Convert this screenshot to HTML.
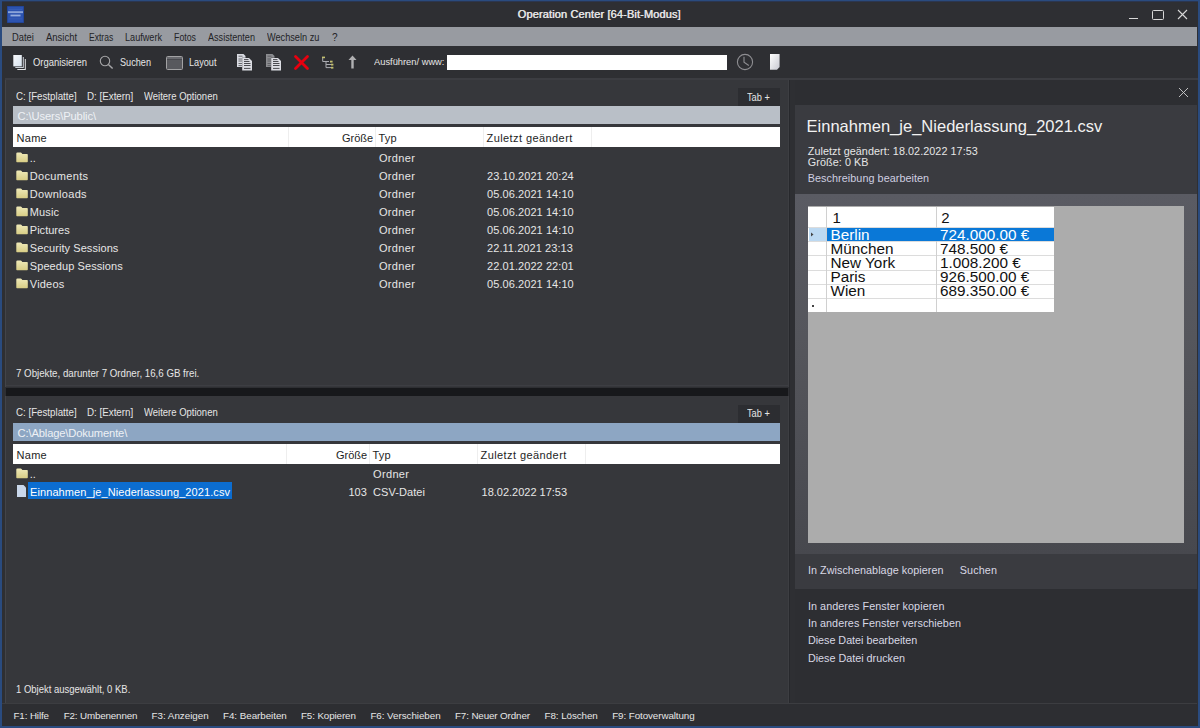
<!DOCTYPE html>
<html><head><meta charset="utf-8"><style>
html,body{margin:0;padding:0;width:1200px;height:728px;overflow:hidden;background:#2b2c30}
body{position:relative;font-family:"Liberation Sans", sans-serif}
div{box-sizing:content-box}
</style></head><body>
<div style="position:absolute;left:0px;top:0px;width:1200px;height:728px;background:#2a4b7f;"></div>
<div style="position:absolute;left:2px;top:1px;width:1196px;height:725px;background:#2e2f33;"></div>
<div style="position:absolute;left:2px;top:1px;width:1196px;height:1px;background:#2b3650;"></div>
<svg style="position:absolute;left:7px;top:6px" width="17" height="17" viewBox="0 0 17 17"><rect x="0" y="0" width="17" height="17" fill="#1f3f8a"/><rect x="0.6" y="0.6" width="15.8" height="15.8" fill="#2c53b0"/><rect x="1" y="5.2" width="15" height="1.9" fill="#8aa3d8"/><rect x="3.5" y="8.6" width="10" height="1.8" fill="#95adde"/><rect x="2" y="3" width="13" height="0.6" fill="#3f64bc"/><rect x="2" y="12.6" width="13" height="0.6" fill="#3f64bc"/></svg>
<div style="position:absolute;left:517.50px;top:7.56px;font-size:11px;line-height:12.65px;color:#e4e4e4;font-weight:400;letter-spacing:0.133px;white-space:pre;text-shadow:0.45px 0 0 #e4e4e4;">Operation Center [64-Bit-Modus]</div>
<div style="position:absolute;left:1129px;top:18px;width:9px;height:1px;background:#d8d8d8;"></div>
<div style="position:absolute;left:1152px;top:10px;width:10px;height:8px;border:1px solid #d8d8d8;border-radius:1.5px"></div>
<svg style="position:absolute;left:1177px;top:9px" width="11" height="11"><path d="M1 1L10 10M10 1L1 10" stroke="#d8d8d8" stroke-width="1.1"/></svg>
<div style="position:absolute;left:2px;top:27px;width:1195px;height:19px;background:#989ba1;"></div>
<div style="position:absolute;left:12.20px;top:31.58px;font-size:10px;line-height:11.5px;color:#232326;font-weight:400;letter-spacing:0.000px;white-space:pre;transform:scaleX(0.9326);transform-origin:0 0;">Datei</div>
<div style="position:absolute;left:45.50px;top:31.58px;font-size:10px;line-height:11.5px;color:#232326;font-weight:400;letter-spacing:0.000px;white-space:pre;transform:scaleX(0.9466);transform-origin:0 0;">Ansicht</div>
<div style="position:absolute;left:88.80px;top:31.58px;font-size:10px;line-height:11.5px;color:#232326;font-weight:400;letter-spacing:0.000px;white-space:pre;transform:scaleX(0.8529);transform-origin:0 0;">Extras</div>
<div style="position:absolute;left:124.80px;top:31.58px;font-size:10px;line-height:11.5px;color:#232326;font-weight:400;letter-spacing:0.000px;white-space:pre;transform:scaleX(0.9129);transform-origin:0 0;">Laufwerk</div>
<div style="position:absolute;left:173.80px;top:31.58px;font-size:10px;line-height:11.5px;color:#232326;font-weight:400;letter-spacing:0.000px;white-space:pre;transform:scaleX(0.8800);transform-origin:0 0;">Fotos</div>
<div style="position:absolute;left:208.00px;top:31.58px;font-size:10px;line-height:11.5px;color:#232326;font-weight:400;letter-spacing:0.000px;white-space:pre;transform:scaleX(0.9082);transform-origin:0 0;">Assistenten</div>
<div style="position:absolute;left:267.00px;top:31.58px;font-size:10px;line-height:11.5px;color:#232326;font-weight:400;letter-spacing:0.000px;white-space:pre;transform:scaleX(0.9173);transform-origin:0 0;">Wechseln zu</div>
<div style="position:absolute;left:332.00px;top:31.58px;font-size:10px;line-height:11.5px;color:#232326;font-weight:400;letter-spacing:0.000px;white-space:pre;">?</div>
<div style="position:absolute;left:2px;top:46px;width:1196px;height:32px;background:#2e2f33;"></div>
<div style="position:absolute;left:33.00px;top:57.32px;font-size:10.4px;line-height:11.96px;color:#e6e6e6;font-weight:400;letter-spacing:0.000px;white-space:pre;transform:scaleX(0.9076);transform-origin:0 0;">Organisieren</div>
<div style="position:absolute;left:120.00px;top:57.32px;font-size:10.4px;line-height:11.96px;color:#e6e6e6;font-weight:400;letter-spacing:0.000px;white-space:pre;transform:scaleX(0.8794);transform-origin:0 0;">Suchen</div>
<div style="position:absolute;left:188.50px;top:57.32px;font-size:10.4px;line-height:11.96px;color:#e6e6e6;font-weight:400;letter-spacing:0.000px;white-space:pre;transform:scaleX(0.8800);transform-origin:0 0;">Layout</div>
<div style="position:absolute;left:373.50px;top:56.47px;font-size:9.8px;line-height:11.27px;color:#e6e6e6;font-weight:400;letter-spacing:0.000px;white-space:pre;transform:scaleX(0.9511);transform-origin:0 0;">Ausführen/ www:</div>
<div style="position:absolute;left:447px;top:55px;width:280px;height:15px;background:#ffffff;"></div>
<svg style="position:absolute;left:12px;top:53px" width="16" height="19" viewBox="0 0 16 19">
<defs><linearGradient id="pg" x1="0" y1="0" x2="1" y2="1"><stop offset="0" stop-color="#f7f8fb"/><stop offset="1" stop-color="#d6e2ee"/></linearGradient></defs>
<rect x="5.3" y="6" width="8.5" height="11" fill="#e2e3e6"/>
<rect x="4.3" y="5" width="8.5" height="11" fill="#2e2f33"/>
<rect x="3.3" y="4" width="8.5" height="11" fill="#c9ced5"/>
<rect x="2.3" y="3" width="8.5" height="11" fill="#2e2f33"/>
<rect x="1.3" y="2" width="8.5" height="11.4" fill="url(#pg)"/>
</svg>
<svg style="position:absolute;left:99px;top:55px" width="17" height="17" viewBox="0 0 17 17"><circle cx="6" cy="6" r="4.7" fill="none" stroke="#a6a6a8" stroke-width="1.1"/><path d="M9.4 9.4L13.6 13.6" stroke="#a6a6a8" stroke-width="1.4"/></svg>
<div style="position:absolute;left:166px;top:55.5px;width:15px;height:12.5px;border:1px solid #a2a2a4;border-radius:1.5px;background:linear-gradient(#68696e 0,#68696e 2.5px,#48494e 2.5px,#58595e 3.5px)"></div>
<svg style="position:absolute;left:235.5px;top:53px" width="18" height="19" viewBox="0 0 18 19">
<path d="M1 1H7.5L9.5 3V14H1Z" fill="#d9dbe2"/>
<g stroke="#5a5b60" stroke-width="0.9"><path d="M2.5 3.2H6.5M2.5 6H8M2.5 8H8M2.5 10.5H8M2.5 12.6H6"/></g>
<path d="M6 4.7H13.2L16.2 7.8V17.8H6Z" fill="#2e2f33"/>
<path d="M6.2 4.9H13L16 8V17.6H6.2Z" fill="#dcdde3"/>
<g stroke="#4a4b50" stroke-width="1"><path d="M8 6.6H12.5M8 8.5H13.5M8 10.5H14.5M8 12.5H14.5M8 15.4H14.5"/></g>
</svg>
<svg style="position:absolute;left:264.8px;top:53px" width="18" height="19" viewBox="0 0 18 19">
<path d="M1 1H7.5L9.5 3V14H1Z" fill="#8b8c90"/>
<g stroke="#5a5b60" stroke-width="0.9"><path d="M2.5 3.2H6.5M2.5 6H8M2.5 8H8M2.5 10.5H8M2.5 12.6H6"/></g>
<path d="M6 4.7H13.2L16.2 7.8V17.8H6Z" fill="#2e2f33"/>
<path d="M6.2 4.9H13L16 8V17.6H6.2Z" fill="#dcdde3"/>
<g stroke="#4a4b50" stroke-width="1"><path d="M8 6.6H12.5M8 8.5H13.5M8 10.5H14.5M8 12.5H14.5M8 15.4H14.5"/></g>
</svg>
<svg style="position:absolute;left:293px;top:54px" width="17" height="17" viewBox="0 0 17 17"><path d="M2.5 2.5L14.5 14.5M14.5 2.5L2.5 14.5" stroke="#e8000f" stroke-width="2.8" stroke-linecap="round"/></svg>
<svg style="position:absolute;left:320px;top:55px" width="15" height="15" viewBox="0 0 15 15">
<g stroke="#a9aab0" stroke-width="1" fill="none"><path d="M2.7 3V6.5H9M6 6.5V12.6H11M6 9.5H11"/></g>
<g fill="#c4c070"><rect x="2" y="1.6" width="3" height="1.6"/><rect x="10" y="5.7" width="2.6" height="1.8"/><rect x="11" y="8.7" width="2.4" height="1.8"/><rect x="11" y="11.8" width="2.4" height="1.8"/></g>
</svg>
<svg style="position:absolute;left:347px;top:54px" width="11" height="16" viewBox="0 0 11 16"><path d="M5.5 1.5L9.5 6H1.5Z" fill="#b0b0b2"/><rect x="4.3" y="5.5" width="2.4" height="9" fill="#b0b0b2"/></svg>
<svg style="position:absolute;left:736px;top:53px" width="18" height="18" viewBox="0 0 18 18"><circle cx="9" cy="9" r="7.6" fill="none" stroke="#8e8e92" stroke-width="1.1"/><path d="M8 3.8V9.2L12.8 12.5" fill="none" stroke="#8e8e92" stroke-width="1.1"/></svg>
<svg style="position:absolute;left:769px;top:53px" width="12" height="18" viewBox="0 0 12 18">
<defs><linearGradient id="pg2" x1="0" y1="0" x2="1" y2="1"><stop offset="0" stop-color="#ffffff"/><stop offset="1" stop-color="#c8c9d2"/></linearGradient></defs>
<path d="M1 1H10.6V14L8 16.7H1Z" fill="url(#pg2)"/></svg>
<div style="position:absolute;left:5px;top:78px;width:1193px;height:2px;background:#3c3d42;"></div>
<div style="position:absolute;left:5px;top:80px;width:784px;height:307px;background:#36373b;"></div>
<div style="position:absolute;left:5px;top:80px;width:1px;height:307px;background:#434449;"></div>
<div style="position:absolute;left:788px;top:80px;width:1px;height:307px;background:#3d3e42;"></div>
<div style="position:absolute;left:16.40px;top:90.53px;font-size:10px;line-height:11.5px;color:#e6e6e6;font-weight:400;letter-spacing:0.000px;white-space:pre;transform:scaleX(0.9735);transform-origin:0 0;">C: [Festplatte]</div>
<div style="position:absolute;left:86.75px;top:90.53px;font-size:10px;line-height:11.5px;color:#e6e6e6;font-weight:400;letter-spacing:0.000px;white-space:pre;transform:scaleX(0.9788);transform-origin:0 0;">D: [Extern]</div>
<div style="position:absolute;left:143.60px;top:90.53px;font-size:10px;line-height:11.5px;color:#e6e6e6;font-weight:400;letter-spacing:0.000px;white-space:pre;transform:scaleX(0.9494);transform-origin:0 0;">Weitere Optionen</div>
<div style="position:absolute;left:738px;top:88px;width:42px;height:18px;background:#2c2d31;"></div>
<div style="position:absolute;left:747.30px;top:91.73px;font-size:10px;line-height:11.5px;color:#e6e6e6;font-weight:400;letter-spacing:0.000px;white-space:pre;transform:scaleX(0.9212);transform-origin:0 0;">Tab +</div>
<div style="position:absolute;left:13px;top:106px;width:767px;height:18px;background:#b9bfc7;"></div>
<div style="position:absolute;left:17.60px;top:109.68px;font-size:11.2px;line-height:12.88px;color:#eef1f5;font-weight:400;letter-spacing:-0.117px;white-space:pre;">C:\Users\Public\</div>
<div style="position:absolute;left:13px;top:127px;width:767px;height:20px;background:#ffffff;"></div>
<div style="position:absolute;left:288px;top:127px;width:1px;height:20px;background:#eeeeee;"></div>
<div style="position:absolute;left:375px;top:127px;width:1px;height:20px;background:#eeeeee;"></div>
<div style="position:absolute;left:483px;top:127px;width:1px;height:20px;background:#eeeeee;"></div>
<div style="position:absolute;left:591px;top:127px;width:1px;height:20px;background:#eeeeee;"></div>
<div style="position:absolute;left:16.50px;top:131.86px;font-size:11px;line-height:12.65px;color:#1e1e1e;font-weight:400;letter-spacing:0.300px;white-space:pre;">Name</div>
<div style="position:absolute;left:173.00px;top:131.86px;font-size:11px;line-height:12.65px;color:#1e1e1e;font-weight:400;letter-spacing:-0.050px;white-space:pre;width:200px;text-align:right;">Größe</div>
<div style="position:absolute;left:378.50px;top:131.86px;font-size:11px;line-height:12.65px;color:#1e1e1e;font-weight:400;letter-spacing:0.200px;white-space:pre;">Typ</div>
<div style="position:absolute;left:486.50px;top:131.86px;font-size:11px;line-height:12.65px;color:#1e1e1e;font-weight:400;letter-spacing:0.420px;white-space:pre;">Zuletzt geändert</div>
<div style="position:absolute;left:15.80px;top:367.92px;font-size:10.4px;line-height:11.96px;color:#e6e6e6;font-weight:400;letter-spacing:0.000px;white-space:pre;transform:scaleX(0.9333);transform-origin:0 0;">7 Objekte, darunter 7 Ordner, 16,6 GB frei.</div>
<div style="position:absolute;left:6px;top:385px;width:782px;height:1px;background:#3d3e43;"></div>
<div style="position:absolute;left:6px;top:388px;width:782px;height:8px;background:#17181b;"></div>
<div style="position:absolute;left:5px;top:396px;width:784px;height:307px;background:#36373b;"></div>
<div style="position:absolute;left:5px;top:396px;width:1px;height:307px;background:#434449;"></div>
<div style="position:absolute;left:788px;top:396px;width:1px;height:307px;background:#3d3e42;"></div>
<div style="position:absolute;left:16.40px;top:407.29px;font-size:10px;line-height:11.5px;color:#e6e6e6;font-weight:400;letter-spacing:0.000px;white-space:pre;transform:scaleX(0.9735);transform-origin:0 0;">C: [Festplatte]</div>
<div style="position:absolute;left:86.75px;top:407.29px;font-size:10px;line-height:11.5px;color:#e6e6e6;font-weight:400;letter-spacing:0.000px;white-space:pre;transform:scaleX(0.9788);transform-origin:0 0;">D: [Extern]</div>
<div style="position:absolute;left:143.60px;top:407.29px;font-size:10px;line-height:11.5px;color:#e6e6e6;font-weight:400;letter-spacing:0.000px;white-space:pre;transform:scaleX(0.9494);transform-origin:0 0;">Weitere Optionen</div>
<div style="position:absolute;left:738px;top:405px;width:42px;height:18px;background:#2c2d31;"></div>
<div style="position:absolute;left:747.30px;top:408.49px;font-size:10px;line-height:11.5px;color:#e6e6e6;font-weight:400;letter-spacing:0.000px;white-space:pre;transform:scaleX(0.9212);transform-origin:0 0;">Tab +</div>
<div style="position:absolute;left:13px;top:423px;width:767px;height:18px;background:#8da6c3;"></div>
<div style="position:absolute;left:17.60px;top:426.68px;font-size:11.2px;line-height:12.88px;color:#eef1f5;font-weight:400;letter-spacing:-0.150px;white-space:pre;">C:\Ablage\Dokumente\</div>
<div style="position:absolute;left:13px;top:444px;width:767px;height:20px;background:#ffffff;"></div>
<div style="position:absolute;left:286px;top:444px;width:1px;height:20px;background:#eeeeee;"></div>
<div style="position:absolute;left:369px;top:444px;width:1px;height:20px;background:#eeeeee;"></div>
<div style="position:absolute;left:477px;top:444px;width:1px;height:20px;background:#eeeeee;"></div>
<div style="position:absolute;left:585px;top:444px;width:1px;height:20px;background:#eeeeee;"></div>
<div style="position:absolute;left:16.50px;top:448.86px;font-size:11px;line-height:12.65px;color:#1e1e1e;font-weight:400;letter-spacing:0.300px;white-space:pre;">Name</div>
<div style="position:absolute;left:167.00px;top:448.86px;font-size:11px;line-height:12.65px;color:#1e1e1e;font-weight:400;letter-spacing:-0.050px;white-space:pre;width:200px;text-align:right;">Größe</div>
<div style="position:absolute;left:372.50px;top:448.86px;font-size:11px;line-height:12.65px;color:#1e1e1e;font-weight:400;letter-spacing:0.200px;white-space:pre;">Typ</div>
<div style="position:absolute;left:480.50px;top:448.86px;font-size:11px;line-height:12.65px;color:#1e1e1e;font-weight:400;letter-spacing:0.420px;white-space:pre;">Zuletzt geändert</div>
<div style="position:absolute;left:15.80px;top:683.72px;font-size:10.4px;line-height:11.96px;color:#e6e6e6;font-weight:400;letter-spacing:0.000px;white-space:pre;transform:scaleX(0.9117);transform-origin:0 0;">1 Objekt ausgewählt, 0 KB.</div>
<svg style="position:absolute;left:16px;top:151.5px" width="12" height="11" viewBox="0 0 12 11"><defs><linearGradient id="fg" x1="0" y1="0" x2="0" y2="1"><stop offset="0" stop-color="#efe9b8"/><stop offset="1" stop-color="#d8cd85"/></linearGradient></defs><path d="M0.3 1.6Q0.3 0.5 1.5 0.5H4.6Q5.3 0.5 5.8 1.2L6.3 1.9H11Q11.8 1.9 11.8 2.7V9.6Q11.8 10.3 11 10.3H1Q0.3 10.3 0.3 9.6Z" fill="url(#fg)"/></svg>
<div style="position:absolute;left:29.80px;top:151.76px;font-size:11px;line-height:12.65px;color:#e6e6e6;font-weight:400;letter-spacing:0.000px;white-space:pre;">..</div>
<div style="position:absolute;left:378.90px;top:151.76px;font-size:11px;line-height:12.65px;color:#e6e6e6;font-weight:400;letter-spacing:0.350px;white-space:pre;">Ordner</div>
<svg style="position:absolute;left:16px;top:169.5px" width="12" height="11" viewBox="0 0 12 11"><defs><linearGradient id="fg" x1="0" y1="0" x2="0" y2="1"><stop offset="0" stop-color="#efe9b8"/><stop offset="1" stop-color="#d8cd85"/></linearGradient></defs><path d="M0.3 1.6Q0.3 0.5 1.5 0.5H4.6Q5.3 0.5 5.8 1.2L6.3 1.9H11Q11.8 1.9 11.8 2.7V9.6Q11.8 10.3 11 10.3H1Q0.3 10.3 0.3 9.6Z" fill="url(#fg)"/></svg>
<div style="position:absolute;left:29.80px;top:169.76px;font-size:11px;line-height:12.65px;color:#e6e6e6;font-weight:400;letter-spacing:0.322px;white-space:pre;">Documents</div>
<div style="position:absolute;left:378.90px;top:169.76px;font-size:11px;line-height:12.65px;color:#e6e6e6;font-weight:400;letter-spacing:0.350px;white-space:pre;">Ordner</div>
<div style="position:absolute;left:487.00px;top:169.76px;font-size:11px;line-height:12.65px;color:#e6e6e6;font-weight:400;letter-spacing:0.070px;white-space:pre;">23.10.2021 20:24</div>
<svg style="position:absolute;left:16px;top:187.5px" width="12" height="11" viewBox="0 0 12 11"><defs><linearGradient id="fg" x1="0" y1="0" x2="0" y2="1"><stop offset="0" stop-color="#efe9b8"/><stop offset="1" stop-color="#d8cd85"/></linearGradient></defs><path d="M0.3 1.6Q0.3 0.5 1.5 0.5H4.6Q5.3 0.5 5.8 1.2L6.3 1.9H11Q11.8 1.9 11.8 2.7V9.6Q11.8 10.3 11 10.3H1Q0.3 10.3 0.3 9.6Z" fill="url(#fg)"/></svg>
<div style="position:absolute;left:29.80px;top:187.76px;font-size:11px;line-height:12.65px;color:#e6e6e6;font-weight:400;letter-spacing:0.291px;white-space:pre;">Downloads</div>
<div style="position:absolute;left:378.90px;top:187.76px;font-size:11px;line-height:12.65px;color:#e6e6e6;font-weight:400;letter-spacing:0.350px;white-space:pre;">Ordner</div>
<div style="position:absolute;left:487.00px;top:187.76px;font-size:11px;line-height:12.65px;color:#e6e6e6;font-weight:400;letter-spacing:0.070px;white-space:pre;">05.06.2021 14:10</div>
<svg style="position:absolute;left:16px;top:205.5px" width="12" height="11" viewBox="0 0 12 11"><defs><linearGradient id="fg" x1="0" y1="0" x2="0" y2="1"><stop offset="0" stop-color="#efe9b8"/><stop offset="1" stop-color="#d8cd85"/></linearGradient></defs><path d="M0.3 1.6Q0.3 0.5 1.5 0.5H4.6Q5.3 0.5 5.8 1.2L6.3 1.9H11Q11.8 1.9 11.8 2.7V9.6Q11.8 10.3 11 10.3H1Q0.3 10.3 0.3 9.6Z" fill="url(#fg)"/></svg>
<div style="position:absolute;left:29.80px;top:205.76px;font-size:11px;line-height:12.65px;color:#e6e6e6;font-weight:400;letter-spacing:0.138px;white-space:pre;">Music</div>
<div style="position:absolute;left:378.90px;top:205.76px;font-size:11px;line-height:12.65px;color:#e6e6e6;font-weight:400;letter-spacing:0.350px;white-space:pre;">Ordner</div>
<div style="position:absolute;left:487.00px;top:205.76px;font-size:11px;line-height:12.65px;color:#e6e6e6;font-weight:400;letter-spacing:0.070px;white-space:pre;">05.06.2021 14:10</div>
<svg style="position:absolute;left:16px;top:223.5px" width="12" height="11" viewBox="0 0 12 11"><defs><linearGradient id="fg" x1="0" y1="0" x2="0" y2="1"><stop offset="0" stop-color="#efe9b8"/><stop offset="1" stop-color="#d8cd85"/></linearGradient></defs><path d="M0.3 1.6Q0.3 0.5 1.5 0.5H4.6Q5.3 0.5 5.8 1.2L6.3 1.9H11Q11.8 1.9 11.8 2.7V9.6Q11.8 10.3 11 10.3H1Q0.3 10.3 0.3 9.6Z" fill="url(#fg)"/></svg>
<div style="position:absolute;left:29.80px;top:223.76px;font-size:11px;line-height:12.65px;color:#e6e6e6;font-weight:400;letter-spacing:0.021px;white-space:pre;">Pictures</div>
<div style="position:absolute;left:378.90px;top:223.76px;font-size:11px;line-height:12.65px;color:#e6e6e6;font-weight:400;letter-spacing:0.350px;white-space:pre;">Ordner</div>
<div style="position:absolute;left:487.00px;top:223.76px;font-size:11px;line-height:12.65px;color:#e6e6e6;font-weight:400;letter-spacing:0.070px;white-space:pre;">05.06.2021 14:10</div>
<svg style="position:absolute;left:16px;top:241.5px" width="12" height="11" viewBox="0 0 12 11"><defs><linearGradient id="fg" x1="0" y1="0" x2="0" y2="1"><stop offset="0" stop-color="#efe9b8"/><stop offset="1" stop-color="#d8cd85"/></linearGradient></defs><path d="M0.3 1.6Q0.3 0.5 1.5 0.5H4.6Q5.3 0.5 5.8 1.2L6.3 1.9H11Q11.8 1.9 11.8 2.7V9.6Q11.8 10.3 11 10.3H1Q0.3 10.3 0.3 9.6Z" fill="url(#fg)"/></svg>
<div style="position:absolute;left:29.80px;top:241.76px;font-size:11px;line-height:12.65px;color:#e6e6e6;font-weight:400;letter-spacing:0.070px;white-space:pre;">Security Sessions</div>
<div style="position:absolute;left:378.90px;top:241.76px;font-size:11px;line-height:12.65px;color:#e6e6e6;font-weight:400;letter-spacing:0.350px;white-space:pre;">Ordner</div>
<div style="position:absolute;left:487.00px;top:241.76px;font-size:11px;line-height:12.65px;color:#e6e6e6;font-weight:400;letter-spacing:0.070px;white-space:pre;">22.11.2021 23:13</div>
<svg style="position:absolute;left:16px;top:259.5px" width="12" height="11" viewBox="0 0 12 11"><defs><linearGradient id="fg" x1="0" y1="0" x2="0" y2="1"><stop offset="0" stop-color="#efe9b8"/><stop offset="1" stop-color="#d8cd85"/></linearGradient></defs><path d="M0.3 1.6Q0.3 0.5 1.5 0.5H4.6Q5.3 0.5 5.8 1.2L6.3 1.9H11Q11.8 1.9 11.8 2.7V9.6Q11.8 10.3 11 10.3H1Q0.3 10.3 0.3 9.6Z" fill="url(#fg)"/></svg>
<div style="position:absolute;left:29.80px;top:259.76px;font-size:11px;line-height:12.65px;color:#e6e6e6;font-weight:400;letter-spacing:0.083px;white-space:pre;">Speedup Sessions</div>
<div style="position:absolute;left:378.90px;top:259.76px;font-size:11px;line-height:12.65px;color:#e6e6e6;font-weight:400;letter-spacing:0.350px;white-space:pre;">Ordner</div>
<div style="position:absolute;left:487.00px;top:259.76px;font-size:11px;line-height:12.65px;color:#e6e6e6;font-weight:400;letter-spacing:0.070px;white-space:pre;">22.01.2022 22:01</div>
<svg style="position:absolute;left:16px;top:277.5px" width="12" height="11" viewBox="0 0 12 11"><defs><linearGradient id="fg" x1="0" y1="0" x2="0" y2="1"><stop offset="0" stop-color="#efe9b8"/><stop offset="1" stop-color="#d8cd85"/></linearGradient></defs><path d="M0.3 1.6Q0.3 0.5 1.5 0.5H4.6Q5.3 0.5 5.8 1.2L6.3 1.9H11Q11.8 1.9 11.8 2.7V9.6Q11.8 10.3 11 10.3H1Q0.3 10.3 0.3 9.6Z" fill="url(#fg)"/></svg>
<div style="position:absolute;left:29.80px;top:277.76px;font-size:11px;line-height:12.65px;color:#e6e6e6;font-weight:400;letter-spacing:0.205px;white-space:pre;">Videos</div>
<div style="position:absolute;left:378.90px;top:277.76px;font-size:11px;line-height:12.65px;color:#e6e6e6;font-weight:400;letter-spacing:0.350px;white-space:pre;">Ordner</div>
<div style="position:absolute;left:487.00px;top:277.76px;font-size:11px;line-height:12.65px;color:#e6e6e6;font-weight:400;letter-spacing:0.070px;white-space:pre;">05.06.2021 14:10</div>
<svg style="position:absolute;left:16px;top:467.5px" width="12" height="11" viewBox="0 0 12 11"><defs><linearGradient id="fg" x1="0" y1="0" x2="0" y2="1"><stop offset="0" stop-color="#efe9b8"/><stop offset="1" stop-color="#d8cd85"/></linearGradient></defs><path d="M0.3 1.6Q0.3 0.5 1.5 0.5H4.6Q5.3 0.5 5.8 1.2L6.3 1.9H11Q11.8 1.9 11.8 2.7V9.6Q11.8 10.3 11 10.3H1Q0.3 10.3 0.3 9.6Z" fill="url(#fg)"/></svg>
<div style="position:absolute;left:29.80px;top:467.86px;font-size:11px;line-height:12.65px;color:#e6e6e6;font-weight:400;letter-spacing:0.000px;white-space:pre;">..</div>
<div style="position:absolute;left:373.00px;top:467.86px;font-size:11px;line-height:12.65px;color:#e6e6e6;font-weight:400;letter-spacing:0.350px;white-space:pre;">Ordner</div>
<svg style="position:absolute;left:17px;top:485px" width="9" height="12"><path d="M0 0H6.5L9 2.5V12H0Z" fill="#c9d7ea"/></svg>
<div style="position:absolute;left:28px;top:482px;width:204px;height:17px;background:#0c6dd0;"></div>
<div style="position:absolute;left:30.00px;top:485.86px;font-size:11px;line-height:12.65px;color:#ffffff;font-weight:400;letter-spacing:0.092px;white-space:pre;">Einnahmen_je_Niederlassung_2021.csv</div>
<div style="position:absolute;left:166.80px;top:485.86px;font-size:11px;line-height:12.65px;color:#e6e6e6;font-weight:400;letter-spacing:0.000px;white-space:pre;width:200px;text-align:right;">103</div>
<div style="position:absolute;left:373.00px;top:485.86px;font-size:11px;line-height:12.65px;color:#e6e6e6;font-weight:400;letter-spacing:0.078px;white-space:pre;">CSV-Datei</div>
<div style="position:absolute;left:481.60px;top:485.86px;font-size:11px;line-height:12.65px;color:#e6e6e6;font-weight:400;letter-spacing:-0.015px;white-space:pre;">18.02.2022 17:53</div>
<div style="position:absolute;left:789px;top:80px;width:1px;height:624px;background:#27282c;"></div>
<div style="position:absolute;left:790px;top:80px;width:5px;height:624px;background:#2e2f33;"></div>
<div style="position:absolute;left:795px;top:80px;width:402px;height:624px;background:#2d2e32;"></div>
<svg style="position:absolute;left:1178px;top:87px" width="11" height="11"><path d="M1 1L10 10M10 1L1 10" stroke="#d0d0d0" stroke-width="0.9"/></svg>
<div style="position:absolute;left:795px;top:105px;width:402px;height:484px;background:#3a3b40;"></div>
<div style="position:absolute;left:806.50px;top:116.80px;font-size:16.5px;line-height:18.97px;color:#f2f2f2;font-weight:400;letter-spacing:0.013px;white-space:pre;">Einnahmen_je_Niederlassung_2021.csv</div>
<div style="position:absolute;left:807.80px;top:145.25px;font-size:10.8px;line-height:12.42px;color:#e6e6e6;font-weight:400;letter-spacing:0.057px;white-space:pre;">Zuletzt geändert: 18.02.2022 17:53</div>
<div style="position:absolute;left:807.80px;top:156.35px;font-size:10.8px;line-height:12.42px;color:#e6e6e6;font-weight:400;letter-spacing:0.070px;white-space:pre;">Größe: 0 KB</div>
<div style="position:absolute;left:807.80px;top:171.85px;font-size:10.8px;line-height:12.42px;color:#cfcfe0;font-weight:400;letter-spacing:0.058px;white-space:pre;">Beschreibung bearbeiten</div>
<div style="position:absolute;left:795px;top:194px;width:402px;height:360px;background:linear-gradient(#5a5b63,#55565c 40%,#47484e);"></div>
<div style="position:absolute;left:808px;top:206px;width:376px;height:337px;background:#acacac;"></div>
<div style="position:absolute;left:808px;top:207px;width:246px;height:105px;background:#ffffff;"></div>
<div style="position:absolute;left:808px;top:227px;width:246px;height:1px;background:#dcdcdc;"></div>
<div style="position:absolute;left:808px;top:241px;width:246px;height:1px;background:#dcdcdc;"></div>
<div style="position:absolute;left:808px;top:255px;width:246px;height:1px;background:#dcdcdc;"></div>
<div style="position:absolute;left:808px;top:270px;width:246px;height:1px;background:#dcdcdc;"></div>
<div style="position:absolute;left:808px;top:284px;width:246px;height:1px;background:#dcdcdc;"></div>
<div style="position:absolute;left:808px;top:298px;width:246px;height:1px;background:#dcdcdc;"></div>
<div style="position:absolute;left:826px;top:207px;width:1px;height:105px;background:#d0d0d0;"></div>
<div style="position:absolute;left:936px;top:207px;width:1px;height:105px;background:#d0d0d0;"></div>
<div style="position:absolute;left:809px;top:228px;width:17px;height:13px;background:#bcd9f2;"></div>
<div style="position:absolute;left:827px;top:228px;width:227px;height:13px;background:#0a78d7;"></div>
<div style="position:absolute;left:832.50px;top:209.18px;font-size:15px;line-height:17.25px;color:#111;font-weight:400;letter-spacing:0.000px;white-space:pre;">1</div>
<div style="position:absolute;left:941.30px;top:209.18px;font-size:15px;line-height:17.25px;color:#111;font-weight:400;letter-spacing:0.000px;white-space:pre;">2</div>
<div style="position:absolute;left:830.50px;top:225.90px;font-size:15.3px;line-height:17.59px;color:#ffffff;font-weight:400;letter-spacing:0.000px;white-space:pre;">Berlin</div>
<div style="position:absolute;left:940.00px;top:225.90px;font-size:15.3px;line-height:17.59px;color:#ffffff;font-weight:400;letter-spacing:0.000px;white-space:pre;">724.000.00 €</div>
<div style="position:absolute;left:830.50px;top:240.20px;font-size:15.3px;line-height:17.59px;color:#111111;font-weight:400;letter-spacing:0.000px;white-space:pre;">München</div>
<div style="position:absolute;left:940.00px;top:240.20px;font-size:15.3px;line-height:17.59px;color:#111111;font-weight:400;letter-spacing:0.000px;white-space:pre;">748.500 €</div>
<div style="position:absolute;left:830.50px;top:254.30px;font-size:15.3px;line-height:17.59px;color:#111111;font-weight:400;letter-spacing:0.000px;white-space:pre;">New York</div>
<div style="position:absolute;left:940.00px;top:254.30px;font-size:15.3px;line-height:17.59px;color:#111111;font-weight:400;letter-spacing:0.000px;white-space:pre;">1.008.200 €</div>
<div style="position:absolute;left:830.50px;top:268.40px;font-size:15.3px;line-height:17.59px;color:#111111;font-weight:400;letter-spacing:0.000px;white-space:pre;">Paris</div>
<div style="position:absolute;left:940.00px;top:268.40px;font-size:15.3px;line-height:17.59px;color:#111111;font-weight:400;letter-spacing:0.000px;white-space:pre;">926.500.00 €</div>
<div style="position:absolute;left:830.50px;top:282.40px;font-size:15.3px;line-height:17.59px;color:#111111;font-weight:400;letter-spacing:0.000px;white-space:pre;">Wien</div>
<div style="position:absolute;left:940.00px;top:282.40px;font-size:15.3px;line-height:17.59px;color:#111111;font-weight:400;letter-spacing:0.000px;white-space:pre;">689.350.00 €</div>
<svg style="position:absolute;left:811px;top:232px" width="4" height="6"><path d="M0 0.5L2.5 2.5L0 4.5Z" fill="#444"/></svg>
<div style="position:absolute;left:812px;top:305px;width:2px;height:2px;background:#444;"></div>
<div style="position:absolute;left:807.90px;top:563.95px;font-size:10.8px;line-height:12.42px;color:#d8d8e4;font-weight:400;letter-spacing:0.048px;white-space:pre;">In Zwischenablage kopieren</div>
<div style="position:absolute;left:959.70px;top:563.95px;font-size:10.8px;line-height:12.42px;color:#d8d8e4;font-weight:400;letter-spacing:0.135px;white-space:pre;">Suchen</div>
<div style="position:absolute;left:807.90px;top:600.25px;font-size:10.8px;line-height:12.42px;color:#d8d8e4;font-weight:400;letter-spacing:0.057px;white-space:pre;">In anderes Fenster kopieren</div>
<div style="position:absolute;left:807.90px;top:617.25px;font-size:10.8px;line-height:12.42px;color:#d8d8e4;font-weight:400;letter-spacing:0.042px;white-space:pre;">In anderes Fenster verschieben</div>
<div style="position:absolute;left:807.90px;top:634.35px;font-size:10.8px;line-height:12.42px;color:#d8d8e4;font-weight:400;letter-spacing:-0.023px;white-space:pre;">Diese Datei bearbeiten</div>
<div style="position:absolute;left:807.90px;top:651.55px;font-size:10.8px;line-height:12.42px;color:#d8d8e4;font-weight:400;letter-spacing:-0.008px;white-space:pre;">Diese Datei drucken</div>
<div style="position:absolute;left:2px;top:703px;width:1195px;height:1px;background:#3c3d41;"></div>
<div style="position:absolute;left:2px;top:704px;width:1196px;height:22px;background:#2d2e32;"></div>
<div style="position:absolute;left:13.50px;top:709.87px;font-size:9.8px;line-height:11.27px;color:#e6e6e6;font-weight:400;letter-spacing:-0.125px;white-space:pre;">F1: Hilfe</div>
<div style="position:absolute;left:63.70px;top:709.87px;font-size:9.8px;line-height:11.27px;color:#e6e6e6;font-weight:400;letter-spacing:-0.150px;white-space:pre;">F2: Umbenennen</div>
<div style="position:absolute;left:151.60px;top:709.87px;font-size:9.8px;line-height:11.27px;color:#e6e6e6;font-weight:400;letter-spacing:-0.014px;white-space:pre;">F3: Anzeigen</div>
<div style="position:absolute;left:223.00px;top:709.87px;font-size:9.8px;line-height:11.27px;color:#e6e6e6;font-weight:400;letter-spacing:-0.035px;white-space:pre;">F4: Bearbeiten</div>
<div style="position:absolute;left:301.00px;top:709.87px;font-size:9.8px;line-height:11.27px;color:#e6e6e6;font-weight:400;letter-spacing:-0.111px;white-space:pre;">F5: Kopieren</div>
<div style="position:absolute;left:370.40px;top:709.87px;font-size:9.8px;line-height:11.27px;color:#e6e6e6;font-weight:400;letter-spacing:-0.041px;white-space:pre;">F6: Verschieben</div>
<div style="position:absolute;left:455.00px;top:709.87px;font-size:9.8px;line-height:11.27px;color:#e6e6e6;font-weight:400;letter-spacing:-0.117px;white-space:pre;">F7: Neuer Ordner</div>
<div style="position:absolute;left:544.60px;top:709.87px;font-size:9.8px;line-height:11.27px;color:#e6e6e6;font-weight:400;letter-spacing:-0.077px;white-space:pre;">F8: Löschen</div>
<div style="position:absolute;left:612.20px;top:709.87px;font-size:9.8px;line-height:11.27px;color:#e6e6e6;font-weight:400;letter-spacing:-0.081px;white-space:pre;">F9: Fotoverwaltung</div>
</body></html>
